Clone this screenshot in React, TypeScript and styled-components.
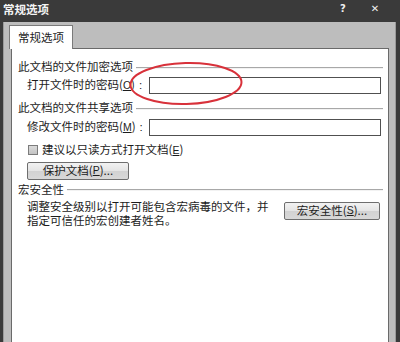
import React from 'react';
import styled, { createGlobalStyle } from 'styled-components';

const GlobalStyle = createGlobalStyle`
  html, body {
    margin: 0;
    padding: 0;
    background: #3a3a3a;
  }
  body {
    font-family: "Noto Sans CJK SC", "Liberation Sans", sans-serif;
  }
`;

const Window = styled.div`
  width: 400px;
  height: 342px;
  background: #3a3a3a;
  display: flex;
  flex-direction: column;
  overflow: hidden;
`;

const TitleBar = styled.div`
  height: 22px;
  display: flex;
  align-items: center;
  padding: 0 0 0 3px;
  color: #f4f4f4;
  font-size: 11.5px;
  font-weight: 700;
  flex-shrink: 0;
`;

const TitleText = styled.span`
  flex: 1;
  line-height: 1;
  margin-top: -3px;
`;

const TitleButton = styled.span<{ $w: number }>`
  width: ${(p) => p.$w}px;
  text-align: center;
  font-size: 10px;
  font-weight: 700;
  color: #f0f0f0;
  margin-top: -6px;
  font-family: "DejaVu Sans", sans-serif;
`;

const Body = styled.div`
  flex: 1;
  margin: 0 4px 0 3px;
  background: #bdbdbd;
  padding: 3px 6px 0 5px;
  display: flex;
  flex-direction: column;
  border-left: 1px solid #9a9a9a;
  border-right: 1px solid #9a9a9a;
`;

const TabStrip = styled.div`
  display: flex;
  height: 23px;
  position: relative;
  z-index: 1;
`;

const Tab = styled.div`
  width: 64px;
  height: 24px;
  box-sizing: border-box;
  background: #ffffff;
  border: 1px solid #7a7a7a;
  border-bottom: none;
  display: flex;
  align-items: center;
  justify-content: center;
  font-size: 11.5px;
  color: #1c1c1c;
  padding-bottom: 2px;
`;

const Panel = styled.div`
  flex: 1;
  margin-left: 2px;
  background: #ffffff;
  border: 1px solid #6a6a6a;
  border-bottom: none;
  padding: 11px 5px 0 6px;
  position: relative;
  display: flex;
  flex-direction: column;
  color: #1c1c1c;
  font-size: 11.5px;
`;

const Heading = styled.div<{ $top: number }>`
  display: flex;
  align-items: center;
  height: 14px;
  margin-top: ${(p) => p.$top}px;
  gap: 3px;
  line-height: 1;
  &::after {
    content: '';
    flex: 1;
    height: 1px;
    background: #a8a8a8;
    border-bottom: 1px solid #f2f2f2;
    margin-top: 1px;
  }
`;

const Row = styled.div<{ $top: number }>`
  display: flex;
  align-items: center;
  padding-left: 9px;
  margin-top: ${(p) => p.$top}px;
`;

const Label = styled.span`
  width: 122px;
  flex-shrink: 0;
  line-height: 1;
  white-space: nowrap;
`;

const Key = styled.span`
  text-decoration: underline;
  font-family: "Liberation Sans", sans-serif;
  font-size: 10.5px;
`;

const Colon = styled.span`
  font-family: "Liberation Sans", sans-serif;
  margin-left: 4px;
`;

const Input = styled.div`
  width: 232px;
  height: 17px;
  box-sizing: border-box;
  border: 1px solid #505050;
  background: #fff;
`;

const Checkbox = styled.span`
  width: 10px;
  height: 10px;
  box-sizing: border-box;
  border: 1px solid #7c7c7c;
  background: linear-gradient(#dadada, #c4c4c4);
  margin-left: 1px;
  margin-right: 4px;
`;

const CheckLabel = styled.span`
  line-height: 1;
`;

const Button = styled.div<{ $w: number }>`
  width: ${(p) => p.$w}px;
  height: 18px;
  box-sizing: border-box;
  border: 1px solid #6e6e6e;
  border-radius: 2px;
  background: linear-gradient(#f2f2f2 0%, #e4e4e4 50%, #d2d2d2 51%, #d8d8d8 100%);
  display: flex;
  align-items: center;
  justify-content: center;
  line-height: 1;
  flex-shrink: 0;
  white-space: nowrap;
`;

const MacroRow = styled.div`
  display: flex;
  align-items: flex-start;
  padding-left: 9px;
  margin-top: 2px;
`;

const MacroText = styled.p`
  margin: 0;
  width: 257px;
  line-height: 14px;
  flex-shrink: 0;
  white-space: nowrap;
`;

const MacroButton = styled(Button)`
  margin-top: 3px;
`;

const Mark = styled.svg`
  position: absolute;
  left: 117px;
  top: 12px;
  pointer-events: none;
`;

const App = () => (
  <Window>
    <GlobalStyle />
    <TitleBar>
      <TitleText>常规选项</TitleText>
      <TitleButton $w={14}>?</TitleButton>
      <TitleButton $w={50}>✕</TitleButton>
    </TitleBar>
    <Body>
      <TabStrip>
        <Tab>常规选项</Tab>
      </TabStrip>
      <Panel>
        <Heading $top={0}>此文档的文件加密选项</Heading>
        <Row $top={3}>
          <Label>
            打开文件时的密码(<Key>O</Key>)<Colon>:</Colon>
          </Label>
          <Input />
        </Row>
        <Heading $top={7}>此文档的文件共享选项</Heading>
        <Row $top={4}>
          <Label>
            修改文件时的密码(<Key>M</Key>)<Colon>:</Colon>
          </Label>
          <Input />
        </Row>
        <Row $top={8}>
          <Checkbox />
          <CheckLabel>
            建议以只读方式打开文档(<Key>E</Key>)
          </CheckLabel>
        </Row>
        <Row $top={6}>
          <Button $w={102}>
            保护文档(<Key>P</Key>)...
          </Button>
        </Row>
        <Heading $top={3}>宏安全性</Heading>
        <MacroRow>
          <MacroText>
            调整安全级别以打开可能包含宏病毒的文件，并
            <br />
            指定可信任的宏创建者姓名。
          </MacroText>
          <MacroButton $w={96}>
            宏安全性(<Key>S</Key>)...
          </MacroButton>
        </MacroRow>
        <Mark width="116" height="46" viewBox="0 0 116 46">
          <ellipse
            cx="57"
            cy="22.5"
            rx="55.5"
            ry="20.5"
            fill="none"
            stroke="#d8313a"
            strokeWidth="2"
            transform="rotate(-1.5 57 22.5)"
          />
        </Mark>
      </Panel>
    </Body>
  </Window>
);

export default App;
